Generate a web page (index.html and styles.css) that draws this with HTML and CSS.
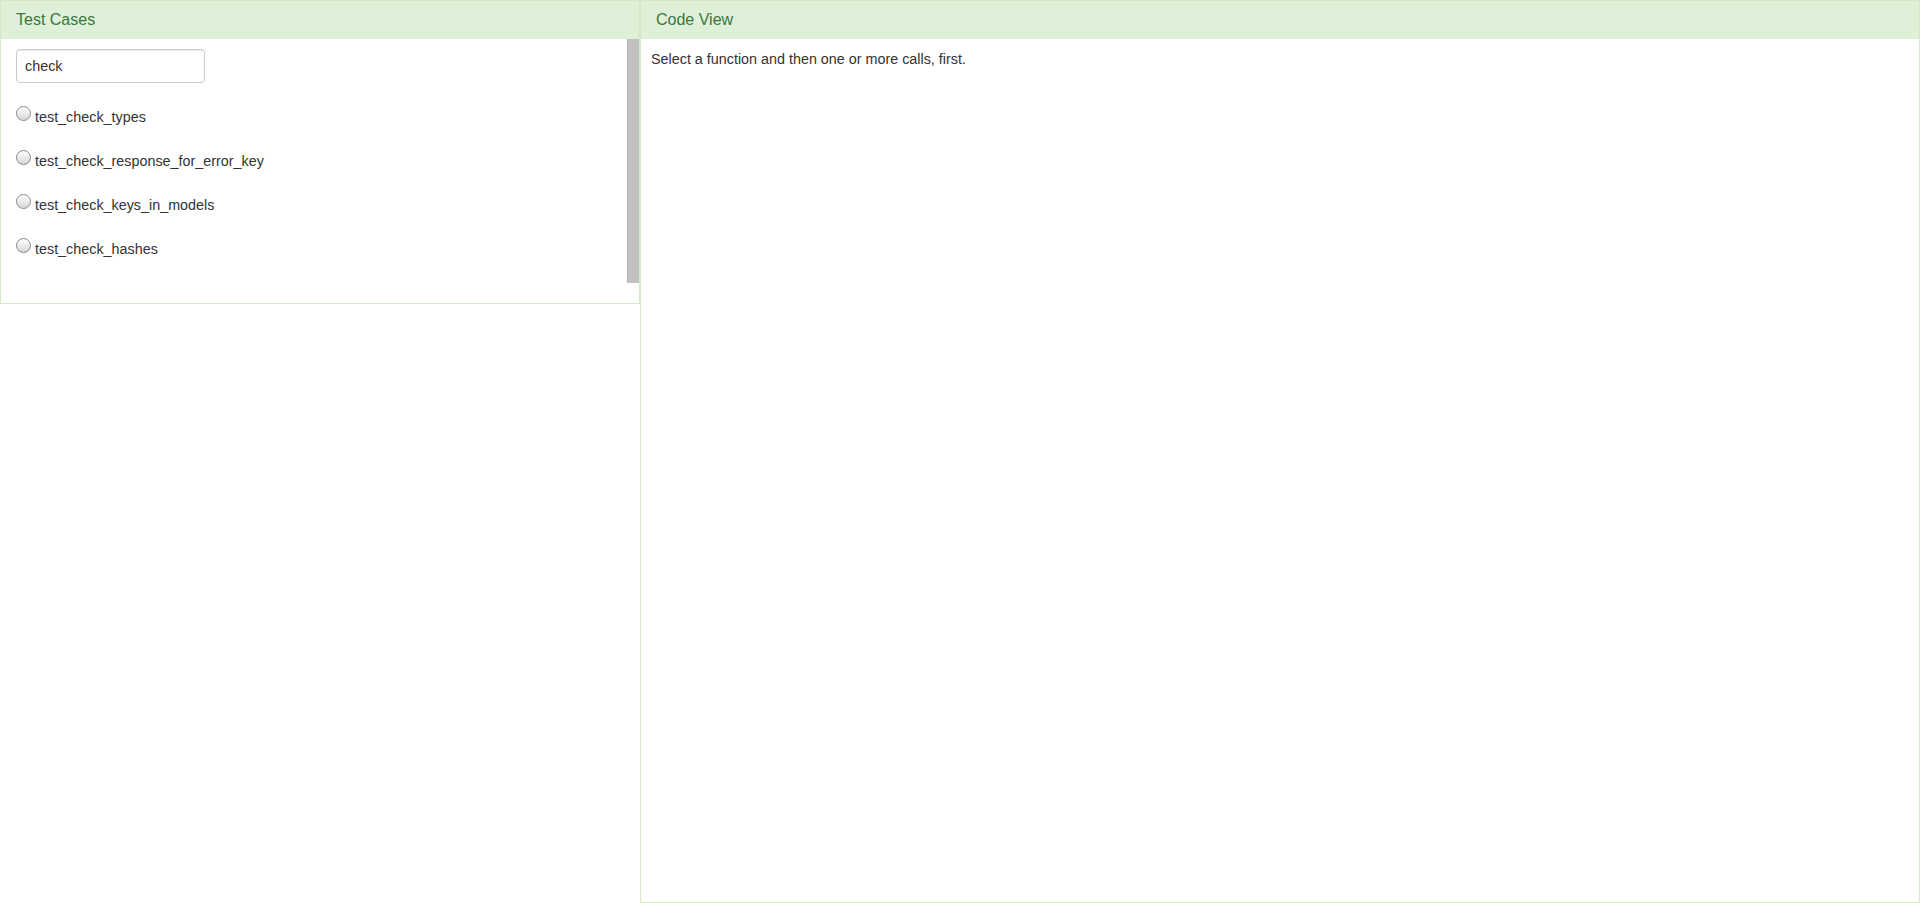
FILE: index.html
```html
<!DOCTYPE html>
<html>
<head>
<meta charset="utf-8">
<link rel="stylesheet" href="styles.css">
</head>
<body>
<div class="layout">
  <section class="panel panel-left">
    <div class="panel-heading"><h3 class="panel-title">Test Cases</h3></div>
    <div class="scroll-area">
      <div class="scroll-content">
        <input class="search" type="text" value="check">
        <ul class="cases">
          <li><label><input type="radio" name="case" class="radio"><span>test_check_types</span></label></li>
          <li><label><input type="radio" name="case" class="radio"><span>test_check_response_for_error_key</span></label></li>
          <li><label><input type="radio" name="case" class="radio"><span>test_check_keys_in_models</span></label></li>
          <li><label><input type="radio" name="case" class="radio"><span>test_check_hashes</span></label></li>
        </ul>
      </div>
      <div class="scrollbar"></div>
    </div>
    <div class="panel-foot"></div>
  </section>
  <section class="panel panel-right">
    <div class="panel-heading"><h3 class="panel-title">Code View</h3></div>
    <div class="code-body">Select a function and then one or more calls, first.</div>
  </section>
</div>
</body>
</html>
```
FILE: styles.css
```css
html, body {
  margin: 0;
  padding: 0;
  background: #fff;
}
body {
  font-family: "Liberation Sans", Arial, Helvetica, sans-serif;
  font-size: 14.35px;
  line-height: 20px;
  color: #333;
}
.layout {
  display: flex;
  align-items: flex-start;
  height: 903px;
}
.panel {
  box-sizing: border-box;
  border: 1px solid #d6e9c6;
  background: #fff;
}
.panel-left {
  width: 640px;
  flex: none;
}
.panel-right {
  flex: 1;
  height: 903px;
}
.panel-heading {
  background: #dff0d8;
  color: #3c763d;
  padding: 10px 15px 11px;
}
.panel-title {
  margin: 0;
  font-size: 16px;
  font-weight: normal;
  line-height: 17px;
}
.scroll-area {
  display: flex;
  height: 244px;
  overflow: hidden;
}
.scroll-content {
  flex: 1;
  padding: 10px 15px 0;
}
.scrollbar {
  flex: none;
  width: 12px;
  background: #c1c1c1;
  box-shadow: inset 1px 0 0 #b2b2b2;
}
.search {
  box-sizing: border-box;
  display: block;
  width: 189px;
  height: 34px;
  padding: 6px 8px;
  border: 1px solid #ccc;
  border-radius: 4px;
  font-family: inherit;
  font-size: 14.35px;
  color: #333;
  box-shadow: inset 0 1px 1px rgba(0,0,0,0.075);
  outline: none;
}
.cases {
  list-style: none;
  margin: 23px 0 0;
  padding: 0;
}
.cases li {
  height: 20px;
  margin-bottom: 24px;
}
.cases label {
  display: inline-flex;
  align-items: flex-start;
  cursor: pointer;
}
.radio {
  -webkit-appearance: none;
  appearance: none;
  box-sizing: border-box;
  flex: none;
  width: 15px;
  height: 15px;
  margin: -1px 4px 0 0;
  border-radius: 50%;
  border: 1px solid #888;
  background: linear-gradient(#ffffff, #d6d6d6);
  box-shadow: inset 0 1px 1px rgba(255,255,255,0.8);
}
.panel-foot {
  height: 20px;
}
.code-body {
  padding: 10px 10px;
}
```
